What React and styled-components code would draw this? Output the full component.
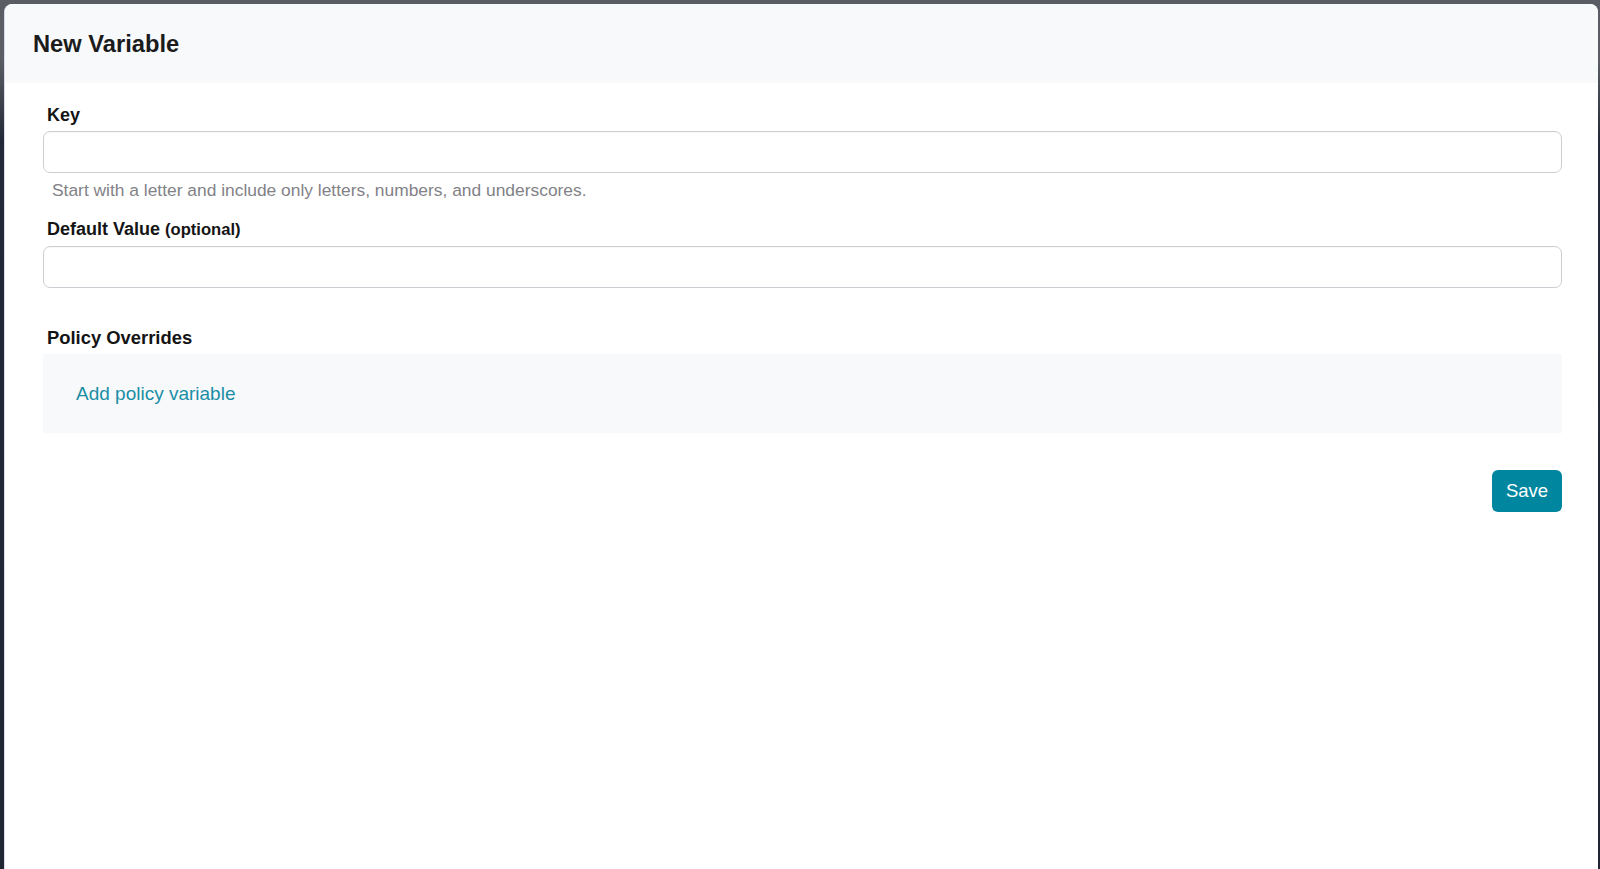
import React from "react";
import styled, { createGlobalStyle } from "styled-components";

const GlobalStyle = createGlobalStyle`
  html, body {
    margin: 0;
    padding: 0;
    height: 100%;
  }
  body {
    font-family: "Liberation Sans", Arial, Helvetica, sans-serif;
    background: linear-gradient(to bottom, #5a5d63 0px, #5a5d63 60px, #232938 140px, #1f2533 100%);
    overflow: hidden;
  }
  #root {
    height: 100%;
  }
`;

const Backdrop = styled.div`
  height: 100vh;
  box-sizing: border-box;
  padding: 4px 2px 0 5px;
  display: flex;
`;

const Panel = styled.div`
  flex: 1;
  background: #ffffff;
  border-radius: 8px 8px 0 0;
  box-shadow: -1px 0 0 #d9dbe8;
  display: flex;
  flex-direction: column;
  overflow: hidden;
`;

const Header = styled.div`
  height: 79px;
  background: #f8f9fa;
  display: flex;
  align-items: center;
  padding-left: 28px;
  flex-shrink: 0;
`;

const Title = styled.h2`
  margin: 0;
  padding-top: 2px;
  font-size: 23.7px;
  font-weight: 700;
  color: #1b1b1b;
`;

const Body = styled.div`
  padding: 21px 36px 0 38px;
  display: flex;
  flex-direction: column;
`;

const Label = styled.label`
  display: block;
  font-size: ${(p) => p.$size || 18}px;
  line-height: 22px;
  font-weight: 700;
  color: #141414;
  padding-left: 4px;
  margin-top: ${(p) => p.$top || 0}px;
`;

const Optional = styled.span`
  font-size: 16.6px;
  font-weight: 700;
`;

const Input = styled.input`
  display: block;
  box-sizing: border-box;
  width: 100%;
  height: 42px;
  margin-top: 5px;
  border: 1.5px solid #cdced3;
  border-radius: 7px;
  background: #fff;
  font-family: inherit;
  font-size: 16px;
  padding: 0 12px;
  outline: none;
  box-shadow: inset 0 1px 1px rgba(0, 0, 0, 0.03);
`;

const Help = styled.div`
  font-size: 17.4px;
  line-height: 20px;
  color: #828287;
  padding-left: 9px;
  margin-top: 7px;
`;

const OverridesBox = styled.div`
  margin-top: 5px;
  background: #f8f9fa;
  height: 79px;
  box-sizing: border-box;
  padding: 28px 33px 0;
`;

const LinkButton = styled.a`
  font-size: 19px;
  line-height: 23px;
  color: #1a8ea6;
  cursor: pointer;
  text-decoration: none;
`;

const Footer = styled.div`
  display: flex;
  justify-content: flex-end;
  margin-top: 37px;
`;

const SaveButton = styled.button`
  width: 70px;
  height: 42px;
  border: none;
  border-radius: 6px;
  background: #00869e;
  color: #ffffff;
  font-family: inherit;
  font-size: 18.5px;
  cursor: pointer;
`;

export default function App() {
  return (
    <>
      <GlobalStyle />
      <Backdrop>
        <Panel>
          <Header>
            <Title>New Variable</Title>
          </Header>
          <Body>
            <Label>Key</Label>
            <Input type="text" />
            <Help>
              Start with a letter and include only letters, numbers, and
              underscores.
            </Help>
            <Label $top={18}>
              Default Value <Optional>(optional)</Optional>
            </Label>
            <Input type="text" />
            <Label $top={39} $size={18.4}>
              Policy Overrides
            </Label>
            <OverridesBox>
              <LinkButton>Add policy variable</LinkButton>
            </OverridesBox>
            <Footer>
              <SaveButton>Save</SaveButton>
            </Footer>
          </Body>
        </Panel>
      </Backdrop>
    </>
  );
}
